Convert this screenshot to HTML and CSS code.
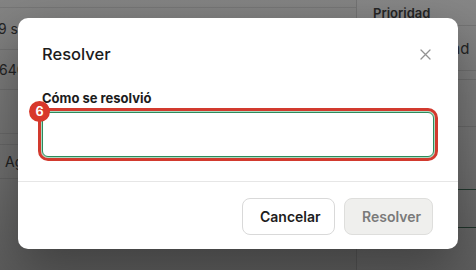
FILE: index.html
```html
<!DOCTYPE html>
<html lang="es">
<head>
<meta charset="utf-8">
<title>Resolver</title>
<link rel="stylesheet" href="styles.css">
</head>
<body>
<div class="page">
  <div class="main">
    <div class="row r1"></div>
    <div class="row r2"><span class="cell c-time">9 segundos</span></div>
    <div class="row r3"><span class="cell c-num">6402</span></div>
    <div class="row r4"></div>
    <div class="row r5"></div>
    <div class="row r6"><span class="cell c-agent">Agente</span></div>
    <div class="row r7"></div>
  </div>
  <div class="side">
    <div class="srow s1"><span class="shead">Prioridad</span></div>
    <div class="srow s2"><span class="sval">Prioridad</span></div>
    <div class="srow s3"></div>
    <div class="srow s4"></div>
    <div class="srow s5"></div>
    <div class="srow s6"></div>
    <div class="srow s7"></div>
  </div>
</div>
<div class="overlay"></div>
<div class="modal" role="dialog" aria-labelledby="mtitle">
  <div class="modal-header">
    <h2 id="mtitle" class="modal-title">Resolver</h2>
    <button class="close" aria-label="Cerrar">
      <svg width="11" height="11" viewBox="0 0 11 11"><path d="M1 1L10 10M10 1L1 10" stroke="#939393" stroke-width="1.3" stroke-linecap="round"/></svg>
    </button>
  </div>
  <div class="modal-body">
    <label class="label" for="res">Cómo se resolvió</label>
    <div class="field">
      <input id="res" class="input" type="text">
      <span class="badge">6</span>
    </div>
  </div>
  <div class="modal-footer">
    <button class="btn btn-secondary">Cancelar</button>
    <button class="btn btn-disabled" disabled>Resolver</button>
  </div>
</div>
</body>
</html>
```
FILE: styles.css
```css
* { box-sizing: border-box; }
html, body { margin: 0; padding: 0; }
body {
  width: 476px;
  height: 270px;
  overflow: hidden;
  font-family: Inter, "Noto Sans", "Liberation Sans", sans-serif;
  background: #f4f4f3;
  position: relative;
}
.page {
  display: grid;
  grid-template-columns: 356px 120px;
  height: 270px;
}
.row {
  border-bottom: 1px solid #d8d8d8;
  display: flex;
  align-items: center;
  font-size: 14px;
  color: #222;
}
.r1 { height: 8px; }
.r2 { height: 42px; }
.r3 { height: 40px; }
.r4 { height: 44px; }
.r5 { height: 11px; }
.r6 { height: 34px; }
.r7 { height: 91px; border-bottom: none; }
.cell { white-space: nowrap; }
.c-time { margin-left: -2px; }
.c-num { margin-left: -1px; }
.c-agent { margin-left: 5px; }
.side {
  border-left: 1px solid #d0d0d0;
  background: #fafafa;
}
.srow {
  border-bottom: 1px solid #d8d8d8;
  display: flex;
  align-items: center;
  padding-left: 16px;
}
.shead { font-size: 13px; font-weight: 600; color: #222; }
.sval { font-size: 15px; color: #222; margin-left: 32px; white-space: nowrap; }
.s1 { height: 26px; }
.s2 { height: 45px; }
.s3 { height: 9px; }
.s4 { height: 47px; }
.s5 { height: 63px; border-bottom-color: #2f6b4e; }
.s6 { height: 38px; border-bottom-color: #2f6b4e; }
.s7 { height: 40px; border-bottom: none; }

.overlay {
  position: absolute;
  inset: 0;
  background: linear-gradient(180deg, rgba(40,40,40,0.55) 0%, rgba(30,30,30,0.62) 60%, rgba(20,20,20,0.68) 100%);
}
.modal {
  position: absolute;
  left: 18px;
  top: 18px;
  width: 440px;
  height: 231px;
  background: #fff;
  border-radius: 10px;
  box-shadow: 0 18px 50px rgba(0,0,0,0.35);
  display: flex;
  flex-direction: column;
}
.modal-header {
  display: flex;
  align-items: center;
  justify-content: space-between;
  padding: 24px 27px 0 24px;
}
.modal-title {
  margin: 0;
  font-size: 16.5px;
  line-height: 24px;
  font-weight: 500;
  color: #1c1c1c;
}
.close {
  border: 0;
  background: none;
  padding: 0;
  width: 11px;
  height: 11px;
  display: flex;
}
.modal-body {
  padding: 23px 24px 24px 24px;
  display: flex;
  flex-direction: column;
}
.label {
  font-size: 13px;
  line-height: 18px;
  font-weight: 700;
  color: #1c1c1c;
  margin-bottom: 5px;
}
.field { position: relative; display: flex; }
.input {
  width: 100%;
  height: 45px;
  border: 1px solid #2e8a5c;
  border-radius: 6px;
  background: #fff;
  box-shadow: 0 0 0 1px #a9dcc0;
  outline: 3px solid #d23a2e;
  outline-offset: 1px;
  font: inherit;
}
.badge {
  position: absolute;
  left: -13px;
  top: -11px;
  width: 21px;
  height: 21px;
  border-radius: 50%;
  background: #d8382b;
  color: #fff;
  font-size: 12.5px;
  font-weight: 700;
  display: flex;
  align-items: center;
  justify-content: center;
}
.modal-footer {
  border-top: 1px solid #e6e6e6;
  display: flex;
  justify-content: flex-end;
  gap: 9px;
  padding: 16px 25px 14px 24px;
}
.btn {
  height: 37px;
  border-radius: 8px;
  font-family: inherit;
  font-size: 14px;
  font-weight: 600;
  padding: 0 17px;
}
.btn-secondary {
  width: 93px;
  background: #fff;
  border: 1px solid #d9d9d9;
  color: #1c1c1c;
}
.btn-disabled {
  width: 89px;
  background: #efefed;
  border: 1px solid #dededc;
  color: #7a7a7a;
}
```
